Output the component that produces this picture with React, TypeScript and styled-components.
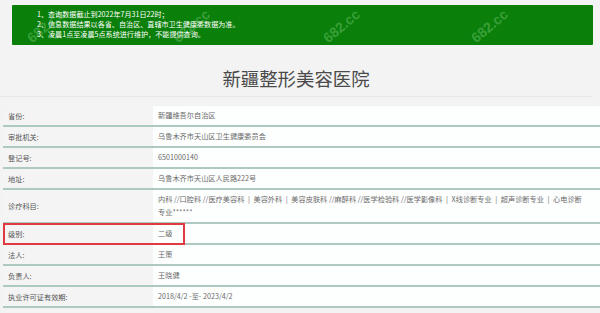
import React from 'react'
import styled, { createGlobalStyle } from 'styled-components'

const GlobalStyle = createGlobalStyle`
  body {
    margin: 0;
    background: #f3f3f3;
    font-family: "Noto Sans CJK SC", "Noto Sans", sans-serif;
  }
`

type Row = { label: string; value: string; tall?: boolean; marked?: boolean }

const PIPE = '\u2002|\u2002'

const rows: Row[] = [
  { label: '省份:', value: '新疆维吾尔自治区' },
  { label: '审批机关:', value: '乌鲁木齐市天山区卫生健康委员会' },
  { label: '登记号:', value: '6501000140' },
  { label: '地址:', value: '乌鲁木齐市天山区人民路222号' },
  {
    label: '诊疗科目:',
    value: [
      '内科 //口腔科 //医疗美容科',
      '美容外科',
      '美容皮肤科 //麻醉科 //医学检验科 //医学影像科',
      'X线诊断专业',
      '超声诊断专业',
      '心电诊断专业******',
    ].join(PIPE),
    tall: true,
  },
  { label: '级别:', value: '二级', marked: true },
  { label: '法人:', value: '王策' },
  { label: '负责人:', value: '王晓健' },
  { label: '执业许可证有效期:', value: '2018/4/2 -至- 2023/4/2' },
]

const notices = [
  '1、查询数据截止到2022年7月31日22时；',
  '2、信息数据结果以各省、自治区、直辖市卫生健康委数据为准。',
  '3、凌晨1点至凌晨5点系统进行维护，不能提供查询。',
]

const marks = [12, 158, 308, 456]

export default function App() {
  return (
    <Page>
      <GlobalStyle />
      <Notice>
        {notices.map((n) => (
          <NoticeLine key={n}>{n}</NoticeLine>
        ))}
        {marks.map((x) => (
          <Watermark key={x} style={{ left: x }}>
            682.cc
          </Watermark>
        ))}
      </Notice>
      <Title>新疆整形美容医院</Title>
      <Table>
        {rows.map((r) => (
          <TableRow key={r.label} tall={r.tall} marked={r.marked}>
            <Label>{r.label}</Label>
            <Value>{r.value}</Value>
          </TableRow>
        ))}
      </Table>
    </Page>
  )
}

const Page = styled.div`
  padding-top: 5px;
  width: 600px;
  height: 313px;
  overflow: hidden;
`

const Notice = styled.div`
  position: relative;
  overflow: hidden;
  margin: 0 7px 0 12px;
  height: 40px;
  box-sizing: border-box;
  padding: 4px 25px;
  background: #0a800a;
  border-radius: 1px;
  color: #ffffff;
`

const NoticeLine = styled.div`
  position: relative;
  z-index: 1;
  font-size: 7.1px;
  line-height: 10px;
  white-space: nowrap;
`

const Watermark = styled.span`
  position: absolute;
  top: 14px;
  font-family: "Liberation Sans", sans-serif;
  font-weight: bold;
  font-size: 14px;
  line-height: 14px;
  color: rgba(170, 235, 170, 0.3);
  transform: rotate(-40deg);
  pointer-events: none;
`

const Title = styled.h1`
  margin: 0 8px 9px 0;
  padding: 21px 0 6px;
  line-height: 24px;
  font-size: 18.4px;
  font-weight: normal;
  color: #4a4a4a;
  text-align: center;
  border-bottom: 1px solid #e7e7e7;
`

const Table = styled.div`
  margin-left: 3px;
  display: flex;
  flex-direction: column;
`

const TableRow = styled.div<{ tall?: boolean; marked?: boolean }>`
  position: relative;
  display: grid;
  grid-template-columns: 150px 1fr;
  min-height: ${({ tall }) => (tall ? '29px' : '19px')};
  border-bottom: 2px solid #aec8c2;
  font-size: 7.2px;

  &::after {
    content: '';
    display: ${({ marked }) => (marked ? 'block' : 'none')};
    position: absolute;
    left: 0;
    top: -1px;
    width: 182px;
    height: 22px;
    box-sizing: border-box;
    border: 2px solid #e0393f;
    pointer-events: none;
  }
`

const Label = styled.div`
  display: flex;
  align-items: center;
  padding-left: 5px;
  background: #f4f4f4;
  color: #555555;
`

const Value = styled.div`
  display: flex;
  align-items: center;
  padding: 3px 14px 3px 5px;
  background: #fdfefe;
  color: #6a6a6a;
  line-height: 13px;
`
